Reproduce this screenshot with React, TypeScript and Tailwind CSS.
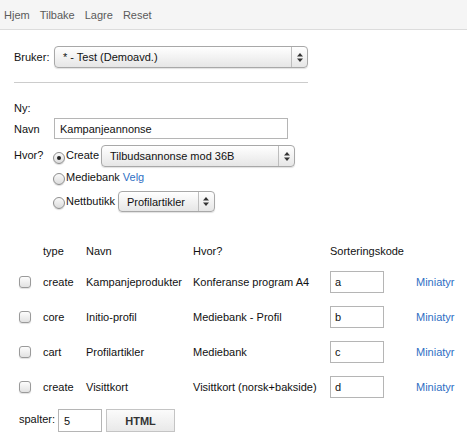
import React from 'react'

const font = { fontFamily: '"Liberation Sans", Arial, Helvetica, sans-serif' }

function Arrows() {
    return (
        <svg width="6" height="9" viewBox="0 0 6 9" className="fill-[#333]">
            <path d="M3 0 L6 3.5 L0 3.5 Z" />
            <path d="M0 5.5 L6 5.5 L3 9 Z" />
        </svg>
    )
}

function FakeSelect({ value, className }: { value: string; className: string }) {
    return (
        <div
            className={`flex items-stretch rounded-[4px] border border-[#a8a8a8] bg-gradient-to-b from-[#ffffff] to-[#e6e6e6] shadow-[0_1px_1px_rgba(0,0,0,0.12)] ${className}`}
        >
            <div className="flex flex-1 items-center truncate pl-[8px] text-[11px] text-[#111]">{value}</div>
            <div className="flex w-[16px] items-center justify-center border-l border-[#bdbdbd]">
                <Arrows />
            </div>
        </div>
    )
}

function Radio({ checked }: { checked?: boolean }) {
    return (
        <span className="flex h-[12px] w-[12px] shrink-0 items-center justify-center rounded-full border border-[#8e8e8e] bg-gradient-to-b from-[#fafafa] to-[#dcdcdc] shadow-[0_1px_1px_rgba(0,0,0,0.15)]">
            {checked && <span className="h-[4px] w-[4px] rounded-full bg-[#222]" />}
        </span>
    )
}

function Checkbox() {
    return (
        <span className="block h-[12px] w-[12px] rounded-[3px] border border-[#9a9a9a] bg-gradient-to-b from-[#fdfdfd] to-[#e2e2e2] shadow-[0_1px_1px_rgba(0,0,0,0.12)]" />
    )
}

const rows = [
    { type: 'create', navn: 'Kampanjeprodukter', hvor: 'Konferanse program A4', kode: 'a' },
    { type: 'core', navn: 'Initio-profil', hvor: 'Mediebank - Profil', kode: 'b' },
    { type: 'cart', navn: 'Profilartikler', hvor: 'Mediebank', kode: 'c' },
    { type: 'create', navn: 'Visittkort', hvor: 'Visittkort (norsk+bakside)', kode: 'd' },
]

export default function App() {
    return (
        <div className="h-[442px] w-[467px] overflow-hidden bg-white text-[11px] leading-[14px] text-[#111]" style={font}>
            {/* top nav */}
            <nav className="flex h-[30px] items-center gap-[10px] border-b border-[#dcdcdc] bg-[#f5f5f5] px-[4px] text-[11px] text-[#5a5a5a]">
                <span>Hjem</span>
                <span>Tilbake</span>
                <span>Lagre</span>
                <span>Reset</span>
            </nav>

            <div className="pl-[14px]">
                {/* bruker */}
                <div className="mt-[16px] flex h-[22px] items-center">
                    <span className="w-[40px]">Bruker:</span>
                    <FakeSelect value="* - Test (Demoavd.)" className="h-[22px] w-[254px]" />
                </div>

                <div className="mt-[14px] w-[294px] border-t border-[#cccccc]" />

                <div className="mt-[18px]">Ny:</div>

                {/* navn */}
                <div className="mt-[3px] flex h-[21px] items-center">
                    <span className="w-[40px]">Navn</span>
                    <div className="flex h-[21px] w-[234px] items-center border border-[#b5b5b5] pl-[5px]">Kampanjeannonse</div>
                </div>

                {/* hvor */}
                <div className="mt-[6px] flex">
                    <span className="mt-[3px] w-[39px]">Hvor?</span>
                    <div className="flex flex-col">
                        <div className="flex h-[22px] items-center">
                            <span className="mt-[3px]"><Radio checked /></span>
                            <span className="ml-[1px] -mt-[2px]">Create</span>
                            <FakeSelect value="Tilbudsannonse mod 36B" className="ml-[2px] h-[22px] w-[194px]" />
                        </div>
                        <div className="mt-[3px] flex h-[15px] items-center">
                            <span className="mt-[3px]"><Radio /></span>
                            <span className="ml-[1px] -mt-[2px]">Mediebank</span>
                            <span className="ml-[3px] -mt-[2px] text-[#2f6fc4]">Velg</span>
                        </div>
                        <div className="mt-[6px] flex h-[21px] items-center">
                            <span className="mt-[3px]"><Radio /></span>
                            <span className="ml-[1px] -mt-[2px]">Nettbutikk</span>
                            <FakeSelect value="Profilartikler" className="ml-[3px] h-[21px] w-[97px]" />
                        </div>
                    </div>
                </div>
            </div>

            {/* table */}
            <div className="mt-[25px] pl-[19px]">
                <div className="grid grid-cols-[24px_43px_107px_137px_86px_1fr]">
                    <div className="h-[27px]" />
                    <div className="flex items-center">type</div>
                    <div className="flex items-center">Navn</div>
                    <div className="flex items-center">Hvor?</div>
                    <div className="flex items-center">Sorteringskode</div>
                    <div />
                    {rows.map((r) => (
                        <React.Fragment key={r.kode}>
                            <div className="flex h-[35px] items-center"><Checkbox /></div>
                            <div className="flex items-center">{r.type}</div>
                            <div className="flex items-center">{r.navn}</div>
                            <div className="flex items-center">{r.hvor}</div>
                            <div className="flex items-center">
                                <div className="flex h-[22px] w-[54px] items-center border border-[#b5b5b5] pl-[4px]">{r.kode}</div>
                            </div>
                            <div className="flex items-center text-[#2f6fc4]">Miniatyr</div>
                        </React.Fragment>
                    ))}
                </div>

                {/* spalter */}
                <div className="mt-[5px] flex h-[23px] items-center">
                    <span className="-mt-[3px] w-[39px]">spalter:</span>
                    <div className="flex h-[23px] w-[44px] items-center border border-[#b5b5b5] pl-[5px]">5</div>
                    <button
                        type="button"
                        className="ml-[4px] h-[23px] w-[69px] border border-[#c4c4c4] bg-gradient-to-b from-[#fbfbfb] to-[#e9e9e9] text-[11px] font-bold text-[#333]"
                    >
                        HTML
                    </button>
                </div>
            </div>
        </div>
    )
}
